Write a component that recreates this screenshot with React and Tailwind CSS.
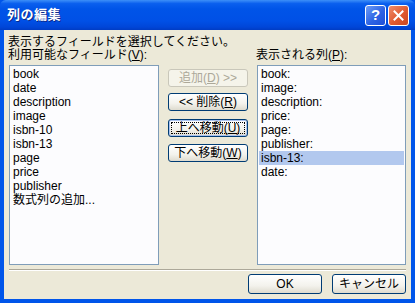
const font = { fontFamily: '"Liberation Sans", "Noto Sans CJK JP", sans-serif' };

const available = ['book', 'date', 'description', 'image', 'isbn-10', 'isbn-13', 'page', 'price', 'publisher', '数式列の追加...'];
const shown = ['book:', 'image:', 'description:', 'price:', 'page:', 'publisher:', 'isbn-13:', 'date:'];

const XpButton = ({ children, disabled, focused, className = '' }) => (
  <button
    disabled={disabled}
    className={`relative flex items-center justify-center rounded-[3px] border text-[12px] leading-none ${
      disabled
        ? 'border-[#c9c7ba] bg-[#f5f4ea] text-[#aca899]'
        : 'border-[#003c74] bg-[linear-gradient(to_bottom,#ffffff_0%,#f3f2ec_60%,#dedbcf_100%)] text-black'
    } ${focused ? 'shadow-[inset_0_0_0_1px_#a9c2ef]' : ''} ${className}`}
  >
    {focused && <span className="absolute inset-[2px] border border-dotted border-black" />}
    <span className="relative">{children}</span>
  </button>
);

const ListBox = ({ items, selected, className = '' }) => (
  <div className={`h-[200px] border border-[#7f9db9] bg-[#fcfcfe] p-[1px] ${className}`}>
    {items.map((it, i) => (
      <div
        key={it}
        className={`h-[14px] pl-[2px] text-[12px] leading-[14px] text-black ${i === selected ? 'bg-[#b2c8ee]' : ''}`}
      >
        {it}
      </div>
    ))}
  </div>
);

export default function App() {
  return (
    <div className="flex h-[303px] w-[415px] flex-col bg-[#0055ea] select-none" style={font}>
      {/* Title bar */}
      <div className="flex h-[30px] shrink-0 items-center rounded-t-[6px] bg-[linear-gradient(to_bottom,#3d8ff8_0%,#0a5fee_12%,#0054e8_30%,#0050e6_70%,#0046d8_90%,#003cc4_100%)] pl-[7px] pr-[6px]">
        <span className="text-[13px] font-bold tracking-[0.5px] text-white [text-shadow:1px_1px_0_#0c2a8c]">列の編集</span>
        <div className="ml-auto flex gap-[2px]">
          <div className="flex h-[21px] w-[21px] items-center justify-center rounded-[3px] border border-white bg-[linear-gradient(135deg,#6d9cf6_0%,#2d63e4_55%,#1d4fd8_100%)] text-[15px] font-bold text-white">
            ?
          </div>
          <div className="flex h-[21px] w-[21px] items-center justify-center rounded-[3px] border border-white bg-[linear-gradient(135deg,#ef8c6c_0%,#e05a30_55%,#cc4620_100%)]">
            <svg width="11" height="11" viewBox="0 0 11 11">
              <path d="M1.5 1.5 L9.5 9.5 M9.5 1.5 L1.5 9.5" stroke="white" strokeWidth="2" strokeLinecap="square" />
            </svg>
          </div>
        </div>
      </div>

      {/* Client area */}
      <div className="flex flex-1 flex-col border-x-4 border-b-4 border-[#0055ea] bg-[#ece9d8] px-[5px] pt-[6px] pb-[5px] text-[12px] text-black">
        <div className="-ml-px h-[13px] leading-[13px]">表示するフィールドを選択してください。</div>
        <div className="flex h-[13px] leading-[13px]">
          <div className="-ml-px w-[249px]">
            利用可能なフィールド(<u>V</u>):
          </div>
          <div className="ml-[-1px]">
            表示される列(<u>P</u>):
          </div>
        </div>

        <div className="mt-[3px] flex gap-[9px]">
          <ListBox items={available} className="w-[150px]" />
          <div className="flex w-[80px] flex-col pt-[4px]">
            <XpButton disabled className="h-[18px]">
              追加(<u>D</u>) &gt;&gt;
            </XpButton>
            <XpButton className="mt-[6px] h-[18px]">
              &lt;&lt; 削除(<u>R</u>)
            </XpButton>
            <XpButton focused className="mt-[8px] h-[18px]">
              上へ移動(<u>U</u>)
            </XpButton>
            <XpButton className="mt-[7px] h-[18px]">
              下へ移動(<u>W</u>)
            </XpButton>
          </div>
          <ListBox items={shown} selected={6} className="w-[149px]" />
        </div>

        <div className="mt-[4px] h-[2px] border-t border-b border-t-[#aca899] border-b-white" />

        <div className="mt-[3px] flex justify-end gap-[10px]">
          <XpButton className="h-[20px] w-[74px]">OK</XpButton>
          <XpButton className="h-[20px] w-[74px]">キャンセル</XpButton>
        </div>
      </div>
    </div>
  );
}
